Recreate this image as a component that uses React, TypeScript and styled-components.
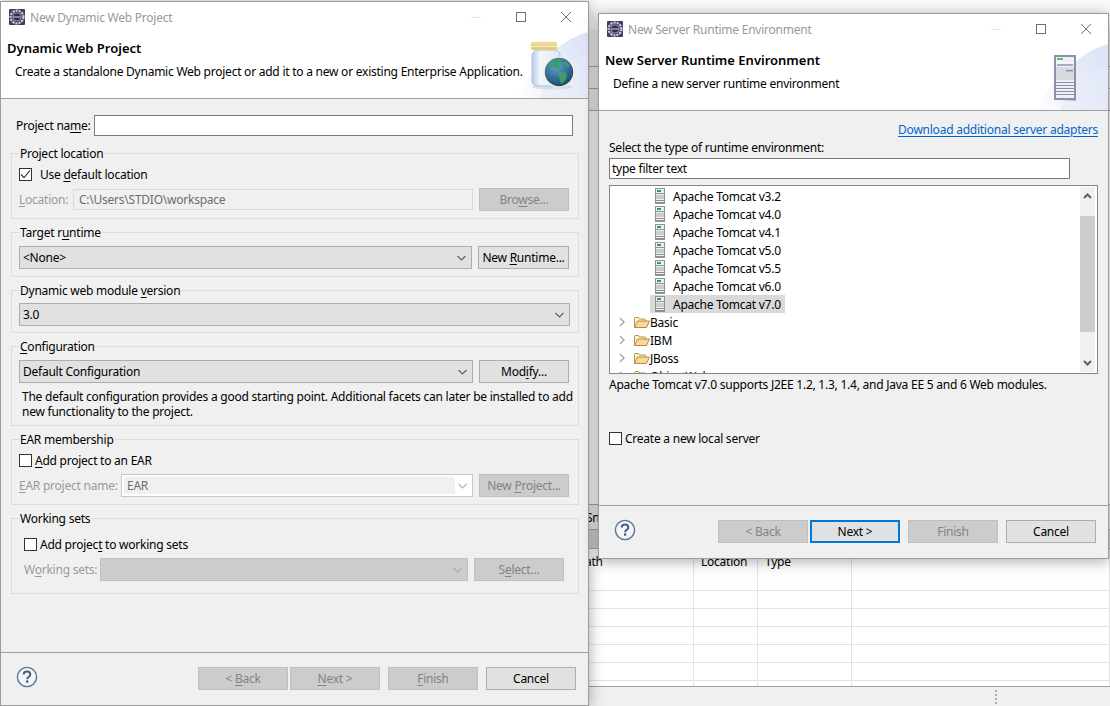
import React from 'react'
import styled, { createGlobalStyle } from 'styled-components'

const GlobalStyle = createGlobalStyle`
  html, body {
    margin: 0;
    padding: 0;
    background: #f0f0f0;
  }
  * {
    box-sizing: border-box;
  }
`

const TOMCAT_VERSIONS = ['v3.2', 'v4.0', 'v4.1', 'v5.0', 'v5.5', 'v6.0', 'v7.0']
const FOLDERS = ['Basic', 'IBM', 'JBoss', 'ObjectWeb']

function EclipseIcon() {
  return (
    <svg width='16' height='16' viewBox='0 0 16 16'>
      <rect width='16' height='16' rx='1' fill='#3f3a66' />
      <circle cx='8' cy='8' r='6.4' fill='none' stroke='#c9c9d2' strokeWidth='2.2' strokeDasharray='2.2 0.9' />
      <circle cx='8' cy='8' r='4.6' fill='#8f8fa0' />
      <circle cx='8' cy='8' r='3.4' fill='#2f2c4c' />
      <rect x='4.5' y='7.4' width='7' height='1.2' fill='#b9b9c6' />
    </svg>
  )
}

function MinimizeIcon() {
  return (
    <svg width='10' height='10' viewBox='0 0 10 10'>
      <path d='M0 5.5h10' stroke='#e3e3e3' fill='none' />
    </svg>
  )
}

function MaximizeIcon() {
  return (
    <svg width='10' height='10' viewBox='0 0 10 10'>
      <rect x='0.5' y='0.5' width='9' height='9' stroke='#707070' fill='none' />
    </svg>
  )
}

function CloseIcon() {
  return (
    <svg width='10' height='10' viewBox='0 0 10 10'>
      <path d='M0 0l10 10M10 0L0 10' stroke='#707070' fill='none' strokeWidth='1' />
    </svg>
  )
}

function Chevron({ color = '#606060' }: { color?: string }) {
  return (
    <svg width='9' height='6' viewBox='0 0 9 6'>
      <path d='M0.5 1l4 4 4-4' stroke={color} fill='none' strokeWidth='1.1' />
    </svg>
  )
}

function HelpIcon() {
  return (
    <svg width='22' height='22' viewBox='0 0 22 22'>
      <circle cx='11' cy='11' r='9.6' fill='#f5f6f8' stroke='#5d7296' strokeWidth='1.4' />
      <path d='M7.7 8.6c0-2 1.5-3 3.3-3s3.3 1 3.3 2.8c0 2.4-3.1 2.4-3.1 4.8' fill='none' stroke='#4a5d7e' strokeWidth='2' />
      <rect x='10' y='14.4' width='2.3' height='2.3' fill='#4a5d7e' />
    </svg>
  )
}

function BannerWash({ id }: { id: string }) {
  return (
    <svg width='72' height='67' viewBox='0 0 72 67'>
      <defs>
        <linearGradient id={id} x1='0' y1='1' x2='1' y2='0.6'>
          <stop offset='0' stopColor='#ffffff' />
          <stop offset='1' stopColor='#dfe5f6' />
        </linearGradient>
      </defs>
      <path d='M72 1C44 8 16 38 0 67h72z' fill={`url(#${id})`} />
      <path d='M72 24C52 27 34 44 24 67h48z' fill='#e6ebf8' opacity='0.6' />
    </svg>
  )
}

function JarGlobeIcon() {
  return (
    <svg width='50' height='50' viewBox='0 0 50 50'>
      <defs>
        <linearGradient id='jarGlass' x1='0' y1='0' x2='1' y2='0'>
          <stop offset='0' stopColor='#b9cbe6' />
          <stop offset='0.3' stopColor='#f3f6fb' />
          <stop offset='1' stopColor='#dfe7f3' />
        </linearGradient>
        <linearGradient id='jarLid' x1='0' y1='0' x2='0' y2='1'>
          <stop offset='0' stopColor='#f2dd94' />
          <stop offset='1' stopColor='#dcc782' />
        </linearGradient>
        <radialGradient id='globeSea' cx='0.4' cy='0.3' r='0.8'>
          <stop offset='0' stopColor='#5da2c9' />
          <stop offset='1' stopColor='#123f66' />
        </radialGradient>
      </defs>
      <ellipse cx='26' cy='46' rx='20' ry='2.4' fill='#cfd6e4' opacity='0.7' />
      <path d='M6 15c0-4 3-6 6-6h16c4 0 6 2 6 6v24c0 4-2 6-6 6H12c-4 0-6-2-6-6z' fill='url(#jarGlass)' stroke='#a9bedd' />
      <rect x='5' y='1' width='26' height='8' rx='2' fill='url(#jarLid)' stroke='#e9dcae' strokeWidth='0.6' />
      <rect x='5' y='5' width='26' height='1' fill='#f7eec6' />
      <circle cx='33' cy='31' r='15.6' fill='#f4efd4' />
      <circle cx='33' cy='31' r='14.2' fill='url(#globeSea)' />
      <path d='M24 22c3-3 8-5 11-4 1 2-2 3-3 5 2 1 3 3 1 5-3 0-4-2-6-2-2 1-4-1-3-4z' fill='#3f9a6f' />
      <path d='M33 31c3-1 7 0 8 3 0 3-3 8-6 9-1-2-1-5-2-7-1-2-1-4 0-5z' fill='#3f9a6f' />
      <path d='M38 20c2 0 5 2 6 5-2 1-5 0-6-1-1-1-1-3 0-4z' fill='#3f9a6f' />
    </svg>
  )
}

function ServerIcon() {
  return (
    <svg width='32' height='48' viewBox='0 0 32 48'>
      <defs>
        <linearGradient id='serverBase' x1='1' y1='0' x2='0' y2='0'>
          <stop offset='0' stopColor='#bdb6ba' />
          <stop offset='1' stopColor='#e8e6ee' stopOpacity='0' />
        </linearGradient>
      </defs>
      <path d='M6 47l22-5v5z' fill='url(#serverBase)' />
      <rect x='6' y='1' width='22' height='45' fill='#8a90ad' />
      <rect x='8' y='3' width='18' height='41' fill='#eef0f5' />
      <rect x='9' y='4' width='6' height='2' fill='#5cc25c' />
      <rect x='8' y='8' width='18' height='1' fill='#fff' />
      <rect x='9' y='10' width='16' height='2' fill='#a6acc4' />
      <rect x='8' y='13' width='18' height='13' fill='#d8dae2' />
      <rect x='18' y='16' width='7' height='1.4' fill='#8a90ad' />
      <rect x='8' y='28' width='18' height='1' fill='#8a90ad' />
      <rect x='8' y='31' width='18' height='1' fill='#8a90ad' />
      <rect x='8' y='34' width='18' height='1' fill='#8a90ad' />
      <rect x='8' y='37' width='18' height='1' fill='#8a90ad' />
      <rect x='8' y='40' width='18' height='1' fill='#8a90ad' />
    </svg>
  )
}

function TomcatIcon() {
  return (
    <svg width='10' height='16' viewBox='0 0 10 16'>
      <rect x='0.5' y='0.5' width='9' height='15' fill='#eef0ee' stroke='#8a9490' />
      <rect x='2' y='2' width='4' height='2' fill='#2f9d4a' />
      <rect x='1' y='5' width='8' height='1' fill='#8a9490' />
      <rect x='1' y='7' width='8' height='4' fill='#c9cecb' />
      <rect x='1' y='12' width='8' height='1' fill='#8a9490' />
      <rect x='1' y='14' width='8' height='1' fill='#8a9490' />
    </svg>
  )
}

function FolderIcon() {
  return (
    <svg width='16' height='13' viewBox='0 0 16 13'>
      <path d='M0.5 11.5V2.5q0-1 1-1h3l1 1.5h5q1 0 1 1V5' fill='#fdf3d6' stroke='#b98c45' />
      <path d='M0.5 11.5l3-6.5h12l-3 6.5z' fill='#f7d999' stroke='#b98c45' strokeLinejoin='round' />
    </svg>
  )
}

function TreeArrow() {
  return (
    <svg width='6' height='10' viewBox='0 0 6 10'>
      <path d='M1 1l4 4-4 4' stroke='#a6a6a6' fill='none' strokeWidth='1.4' />
    </svg>
  )
}

function ScrollArrow({ up }: { up?: boolean }) {
  return (
    <svg width='9' height='6' viewBox='0 0 9 6'>
      <path d={up ? 'M1 5l3.5-3.5L8 5' : 'M1 1l3.5 3.5L8 1'} stroke='#606060' fill='none' strokeWidth='2' />
    </svg>
  )
}

function CheckMark() {
  return (
    <svg width='11' height='11' viewBox='0 0 11 11'>
      <path d='M1 5.5l3 3.2L10 1.5' stroke='#333' fill='none' strokeWidth='1.1' />
    </svg>
  )
}

type WizardProps = {
  title: string
  heading: string
  description: string
  left: number
  top: number
  width: number
  height: number
  bannerId: string
  art: React.ReactNode
  footer: React.ReactNode
  children: React.ReactNode
}

function Wizard(props: WizardProps) {
  return (
    <WindowFrame $left={props.left} $top={props.top} $width={props.width} $height={props.height}>
      <TitleBar>
        <EclipseIcon />
        <TitleText>{props.title}</TitleText>
        <WindowControls>
          <MinimizeIcon />
          <MaximizeIcon />
          <CloseIcon />
        </WindowControls>
      </TitleBar>
      <Banner>
        <BannerWashSlot>
          <BannerWash id={props.bannerId} />
        </BannerWashSlot>
        {props.art}
        <BannerHeading>{props.heading}</BannerHeading>
        <BannerText>{props.description}</BannerText>
      </Banner>
      {props.children}
      <Footer>
        <HelpSlot>
          <HelpIcon />
        </HelpSlot>
        {props.footer}
      </Footer>
    </WindowFrame>
  )
}

function App() {
  return (
    <Desktop>
      <GlobalStyle />
      <BackWindow>
        <BackTopGap />
        <BackToolbar />
        <BackRule />
        <BackRule />
        <BackSpacer />
        <BackTabStrip>
          <BackTabLabel>Snippets</BackTabLabel>
        </BackTabStrip>
        <BackTabBand />
        <BackTable>
          <BackHeadCell $first>Path</BackHeadCell>
          <BackHeadCell>Location</BackHeadCell>
          <BackHeadCell>Type</BackHeadCell>
          <BackHeadCell />
          {Array.from({ length: 24 }).map((_, i) => (
            <BackCell key={i} />
          ))}
        </BackTable>
        <BackStatus>
          <SashDots />
        </BackStatus>
      </BackWindow>

      <Wizard
        title='New Dynamic Web Project'
        heading='Dynamic Web Project'
        description='Create a standalone Dynamic Web project or add it to a new or existing Enterprise Application.'
        left={0}
        top={1}
        width={589}
        height={705}
        bannerId='washLeft'
        art={
          <JarSlot>
            <JarGlobeIcon />
          </JarSlot>
        }
        footer={
          <ButtonBar>
            <ButtonPair>
              <PushButton disabled>
                &lt; <u>B</u>ack
              </PushButton>
              <PushButton disabled>
                <u>N</u>ext &gt;
              </PushButton>
            </ButtonPair>
            <PushButton disabled>
              <u>F</u>inish
            </PushButton>
            <PushButton>Cancel</PushButton>
          </ButtonBar>
        }
      >
        <ProjectBody>
          <ProjectNameRow>
            <FieldLabel $w={78}>
              Project na<u>m</u>e:
            </FieldLabel>
            <TextBox $w={479} />
          </ProjectNameRow>

          <Group $h={66}>
            <Legend>Project location</Legend>
            <CheckRow $top={5}>
              <CheckBox>
                <CheckMark />
              </CheckBox>
              <CheckLabel $gap={8}>
                Use <u>d</u>efault location
              </CheckLabel>
            </CheckRow>
            <Row $top={7} $end={1}>
              <FieldLabel $w={54} $off>
                <u>L</u>ocation:
              </FieldLabel>
              <DisabledField>C:\Users\STDIO\workspace</DisabledField>
              <PushButton disabled>
                Bro<u>w</u>se...
              </PushButton>
            </Row>
          </Group>

          <Group $h={45}>
            <Legend>
              Target r<u>u</u>ntime
            </Legend>
            <Row $top={5} $end={1}>
              <DropDown>
                <DropText>&lt;None&gt;</DropText>
                <Chevron />
              </DropDown>
              <PushButton $w={91}>
                New <u>R</u>untime...
              </PushButton>
            </Row>
          </Group>

          <Group $h={43}>
            <Legend>
              Dynamic web module <u>v</u>ersion
            </Legend>
            <Row $top={4}>
              <DropDown>
                <DropText>3.0</DropText>
                <Chevron />
              </DropDown>
            </Row>
          </Group>

          <Group $h={80}>
            <Legend>
              <u>C</u>onfiguration
            </Legend>
            <Row $top={5} $end={1}>
              <DropDown>
                <DropText>Default Configuration</DropText>
                <Chevron />
              </DropDown>
              <PushButton>
                Mod<u>i</u>fy...
              </PushButton>
            </Row>
            <GroupNote>
              The default configuration provides a good starting point. Additional facets can later be installed to add
              <br />
              new functionality to the project.
            </GroupNote>
          </Group>

          <Group $h={66}>
            <Legend>EAR membership</Legend>
            <CheckRow $top={5}>
              <CheckBox />
              <CheckLabel $gap={3}>
                <u>A</u>dd project to an EAR
              </CheckLabel>
            </CheckRow>
            <Row $top={7} $end={1}>
              <FieldLabel $w={102} $off>
                <u>E</u>AR project name:
              </FieldLabel>
              <ComboBox>
                <ComboField>EAR</ComboField>
                <Chevron color='#b4b4b4' />
              </ComboBox>
              <PushButton disabled>
                New <u>P</u>roject...
              </PushButton>
            </Row>
          </Group>

          <Group $h={76}>
            <Legend>Working sets</Legend>
            <CheckRow $top={10} $indent={5}>
              <CheckBox />
              <CheckLabel $gap={3}>
                Add projec<u>t</u> to working sets
              </CheckLabel>
            </CheckRow>
            <Row $top={7} $indent={5} $end={6}>
              <FieldLabel $w={76} $off>
                W<u>o</u>rking sets:
              </FieldLabel>
              <DropDown $off>
                <DropText />
                <Chevron color='#a8a8a8' />
              </DropDown>
              <PushButton disabled>
                S<u>e</u>lect...
              </PushButton>
            </Row>
          </Group>
        </ProjectBody>
      </Wizard>

      <Wizard
        title='New Server Runtime Environment'
        heading='New Server Runtime Environment'
        description='Define a new server runtime environment'
        left={598}
        top={13}
        width={511}
        height={546}
        bannerId='washRight'
        art={
          <ServerSlot>
            <ServerIcon />
          </ServerSlot>
        }
        footer={
          <ButtonBar>
            <ButtonPair>
              <PushButton disabled>&lt; Back</PushButton>
              <PushButton $primary>Next &gt;</PushButton>
            </ButtonPair>
            <PushButton disabled>Finish</PushButton>
            <PushButton>Cancel</PushButton>
          </ButtonBar>
        }
      >
        <ServerBody>
          <DownloadLink>Download additional server adapters</DownloadLink>
          <SectionLabel>Select the type of runtime environment:</SectionLabel>
          <FilterBox>type filter text</FilterBox>
          <TreeBox>
            <TreeList>
              {TOMCAT_VERSIONS.map((version) => (
                <TomcatRow key={version}>
                  <TomcatItem $selected={version === 'v7.0'}>
                    <TomcatIcon />
                    Apache Tomcat {version}
                  </TomcatItem>
                </TomcatRow>
              ))}
              {FOLDERS.map((folder) => (
                <FolderRow key={folder}>
                  <TreeArrowSlot>
                    <TreeArrow />
                  </TreeArrowSlot>
                  <FolderIcon />
                  {folder}
                </FolderRow>
              ))}
            </TreeList>
            <ScrollBar>
              <ScrollEnd $h={29} $align='flex-start'>
                <ScrollArrow up />
              </ScrollEnd>
              <ScrollThumb />
              <ScrollEnd $h={40} $align='flex-end'>
                <ScrollArrow />
              </ScrollEnd>
            </ScrollBar>
          </TreeBox>
          <RuntimeNote>Apache Tomcat v7.0 supports J2EE 1.2, 1.3, 1.4, and Java EE 5 and 6 Web modules.</RuntimeNote>
          <CheckRow $top={38}>
            <CheckBox />
            <CheckLabel $gap={3}>Create a new local server</CheckLabel>
          </CheckRow>
        </ServerBody>
      </Wizard>
    </Desktop>
  )
}

export default App

const Desktop = styled.div`
  position: relative;
  width: 1110px;
  height: 706px;
  overflow: hidden;
  background: #f0f0f0;
  font-family: 'Noto Sans', sans-serif;
  font-size: 12px;
  letter-spacing: -0.24px;
  color: #000;
  u {
    text-underline-offset: 2px;
    text-decoration-thickness: 1px;
  }
`

const BackWindow = styled.div`
  position: absolute;
  inset: 0;
  display: flex;
  flex-direction: column;
`

const BackTopGap = styled.div`
  height: 30px;
  background: #fbfbfb;
`

const BackToolbar = styled.div`
  height: 37px;
  background: #f0f0f0;
  border-bottom: 1px solid #a8a8a8;
`

const BackRule = styled.div`
  height: 22px;
  background: #f0f0f0;
  border-bottom: 1px solid #a8a8a8;
`

const BackSpacer = styled.div`
  flex: 1;
  background: #fff;
`

const BackTabStrip = styled.div`
  height: 26px;
  background: #f0f0f0;
  border-top: 1px solid #a8a8a8;
  border-bottom: 1px solid #a8a8a8;
  padding-left: 586px;
  line-height: 25px;
`

const BackTabLabel = styled.span``

const BackTabBand = styled.div`
  height: 19px;
  background: #d4d4d4;
  border-bottom: 1px solid #a8a8a8;
`

const BackTable = styled.div`
  height: 137px;
  background: #fff;
  overflow: hidden;
  display: grid;
  grid-template-columns: 694px 64px 94px 1fr;
  grid-template-rows: 42px repeat(6, 18px);
`

const BackHeadCell = styled.div<{ $first?: boolean }>`
  border-right: 1px solid #e2e2e2;
  border-bottom: 1px solid #e2e2e2;
  padding: 4px 0 0 ${(p) => (p.$first ? 578 : 7)}px;
`

const BackCell = styled.div`
  border-right: 1px solid #e2e2e2;
  border-bottom: 1px solid #e2e2e2;
`

const BackStatus = styled.div`
  flex: 0 0 19px;
  background: #f0f0f0;
  border-top: 1px solid #a0a0a0;
  padding: 3px 0 0 995px;
`

const SashDots = styled.div`
  width: 2px;
  height: 16px;
  background: repeating-linear-gradient(to bottom, #b0b0b0 0 2px, transparent 2px 4px);
`

const WindowFrame = styled.div<{ $left: number; $top: number; $width: number; $height: number }>`
  position: absolute;
  left: ${(p) => p.$left}px;
  top: ${(p) => p.$top}px;
  width: ${(p) => p.$width}px;
  height: ${(p) => p.$height}px;
  display: flex;
  flex-direction: column;
  background: #f0f0f0;
  border: 1px solid #9c9c9c;
  box-shadow: 0 2px 14px rgba(0, 0, 0, 0.35);
`

const TitleBar = styled.div`
  flex: 0 0 30px;
  display: flex;
  align-items: center;
  padding-left: 8px;
  background: #fff;
`

const TitleText = styled.span`
  margin-left: 5px;
  color: #999;
`

const WindowControls = styled.div`
  margin-left: auto;
  display: flex;
  align-items: center;
  gap: 35px;
  padding-right: 17px;
`

const Banner = styled.div`
  position: relative;
  flex: 0 0 67px;
  padding: 8px 0 0 6px;
  background: #fff;
  border-bottom: 1px solid #a0a0a0;
`

const BannerWashSlot = styled.div`
  position: absolute;
  right: 0;
  bottom: 0;
  line-height: 0;
`

const JarSlot = styled.div`
  position: absolute;
  right: 12px;
  top: 9px;
  line-height: 0;
`

const ServerSlot = styled.div`
  position: absolute;
  right: 28px;
  top: 10px;
  line-height: 0;
`

const BannerHeading = styled.div`
  position: relative;
  height: 16px;
  line-height: 16px;
  font-weight: 600;
  font-size: 13px;
  letter-spacing: 0;
`

const BannerText = styled.div`
  position: relative;
  margin: 8px 0 0 8px;
  height: 16px;
  line-height: 16px;
`

const Footer = styled.div`
  flex: 0 0 53px;
  display: flex;
  align-items: flex-start;
  padding: 14px 12px 0 15px;
  border-top: 1px solid #a0a0a0;
`

const HelpSlot = styled.div`
  line-height: 0;
  margin-top: -1px;
`

const ButtonBar = styled.div`
  margin-left: auto;
  display: flex;
  gap: 8px;
`

const ButtonPair = styled.div`
  display: flex;
  gap: 2px;
`

const PushButton = styled.button<{ $w?: number; $primary?: boolean }>`
  flex: 0 0 ${(p) => p.$w ?? 90}px;
  width: ${(p) => p.$w ?? 90}px;
  height: 23px;
  padding: 0;
  font: inherit;
  letter-spacing: inherit;
  color: #000;
  background: #e1e1e1;
  border: 1px solid #adadad;
  border-radius: 0;
  ${(p) => p.$primary && 'border: 2px solid #0078d7;'}
  &:disabled {
    color: #838383;
    background: #ccc;
    border-color: #bfbfbf;
  }
`

const ProjectBody = styled.div`
  flex: 1;
  display: flex;
  flex-direction: column;
  gap: 13px;
  padding: 16px 9px 0 10px;
`

const ProjectNameRow = styled.div`
  display: flex;
  align-items: center;
  height: 21px;
  margin: 0 0 4px 5px;
`

const FieldLabel = styled.label<{ $w: number; $off?: boolean }>`
  flex: 0 0 ${(p) => p.$w}px;
  color: ${(p) => (p.$off ? '#9a9a9a' : '#000')};
  white-space: nowrap;
`

const TextBox = styled.div<{ $w: number }>`
  width: ${(p) => p.$w}px;
  height: 21px;
  background: #fff;
  border: 1px solid #7a7a7a;
`

const Group = styled.div<{ $h: number }>`
  height: ${(p) => p.$h}px;
  display: flex;
  flex-direction: column;
  padding: 0 8px 0 7px;
  border: 1px solid #dcdcdc;
`

const Legend = styled.div`
  flex: 0 0 16px;
  align-self: flex-start;
  margin-top: -8px;
  margin-left: 0;
  padding: 0 1px;
  line-height: 16px;
  background: #f0f0f0;
`

const Row = styled.div<{ $top: number; $indent?: number; $end?: number }>`
  display: flex;
  align-items: center;
  gap: 6px;
  height: 23px;
  margin-top: ${(p) => p.$top}px;
  padding-left: ${(p) => p.$indent ?? 0}px;
  padding-right: ${(p) => p.$end ?? 0}px;
  ${FieldLabel} {
    margin-right: -6px;
  }
`

const CheckRow = styled.div<{ $top: number; $indent?: number }>`
  display: flex;
  align-items: center;
  height: 14px;
  margin-top: ${(p) => p.$top}px;
  margin-left: ${(p) => p.$indent ?? 0}px;
`

const CheckBox = styled.div`
  flex: 0 0 13px;
  height: 13px;
  display: flex;
  align-items: center;
  justify-content: center;
  background: #fff;
  border: 1px solid #333;
`

const CheckLabel = styled.span<{ $gap: number }>`
  margin-left: ${(p) => p.$gap}px;
  white-space: nowrap;
`

const DisabledField = styled.div`
  flex: 1;
  height: 21px;
  padding-left: 5px;
  line-height: 19px;
  color: #6d6d6d;
  background: #f0f0f0;
  border: 1px solid #d9d9d9;
`

const DropDown = styled.div<{ $off?: boolean }>`
  flex: 1;
  height: 23px;
  display: flex;
  align-items: center;
  padding: 0 5px 0 3px;
  background: ${(p) => (p.$off ? '#ccc' : '#e1e1e1')};
  border: 1px solid ${(p) => (p.$off ? '#bfbfbf' : '#adadad')};
`

const DropText = styled.span`
  flex: 1;
`

const ComboBox = styled.div`
  flex: 1;
  height: 23px;
  display: flex;
  align-items: center;
  padding: 2px 5px 2px 2px;
  background: #fff;
  border: 1px solid #c8c8c8;
`

const ComboField = styled.div`
  flex: 1;
  align-self: stretch;
  margin-right: 3px;
  padding-left: 3px;
  line-height: 17px;
  color: #6d6d6d;
  background: #f0f0f0;
`

const GroupNote = styled.div`
  margin: 6px 0 0 3px;
  line-height: 15px;
  white-space: nowrap;
`

const ServerBody = styled.div`
  flex: 1;
  display: flex;
  flex-direction: column;
  padding: 11px 10px 0;
`

const DownloadLink = styled.a`
  align-self: flex-end;
  height: 16px;
  line-height: 16px;
  color: #0066cc;
  text-decoration: underline;
  text-underline-offset: 2px;
`

const SectionLabel = styled.div`
  margin-top: 2px;
  height: 16px;
  line-height: 16px;
`

const FilterBox = styled.div`
  margin-top: 2px;
  width: 461px;
  height: 21px;
  padding-left: 2px;
  line-height: 19px;
  background: #fff;
  border: 1px solid #7a7a7a;
`

const TreeBox = styled.div`
  margin-top: 6px;
  height: 189px;
  display: flex;
  background: #fff;
  border: 1px solid #828790;
`

const TreeList = styled.div`
  flex: 1;
  padding-top: 1px;
  overflow: hidden;
`

const TomcatRow = styled.div`
  height: 18px;
  padding-left: 40px;
`

const TomcatItem = styled.div<{ $selected?: boolean }>`
  display: inline-flex;
  align-items: center;
  gap: 8px;
  height: 18px;
  padding: 0 4px 0 5px;
  background: ${(p) => (p.$selected ? '#d9d9d9' : 'transparent')};
`

const FolderRow = styled.div`
  display: flex;
  align-items: center;
  height: 18px;
  padding-left: 9px;
  svg + svg {
    margin-right: 5px;
  }
`

const TreeArrowSlot = styled.div`
  flex: 0 0 15px;
  line-height: 0;
`

const ScrollBar = styled.div`
  flex: 0 0 15px;
  margin: 1px 2px 0 0;
  display: flex;
  flex-direction: column;
  height: 185px;
  background: #f0f0f0;
`

const ScrollEnd = styled.div<{ $h: number; $align: string }>`
  flex: 0 0 ${(p) => p.$h}px;
  display: flex;
  justify-content: center;
  align-items: ${(p) => p.$align};
  padding: 6px 0;
`

const ScrollThumb = styled.div`
  flex: 1;
  background: #cdcdcd;
`

const RuntimeNote = styled.div`
  margin-top: 3px;
  height: 16px;
  line-height: 16px;
`
